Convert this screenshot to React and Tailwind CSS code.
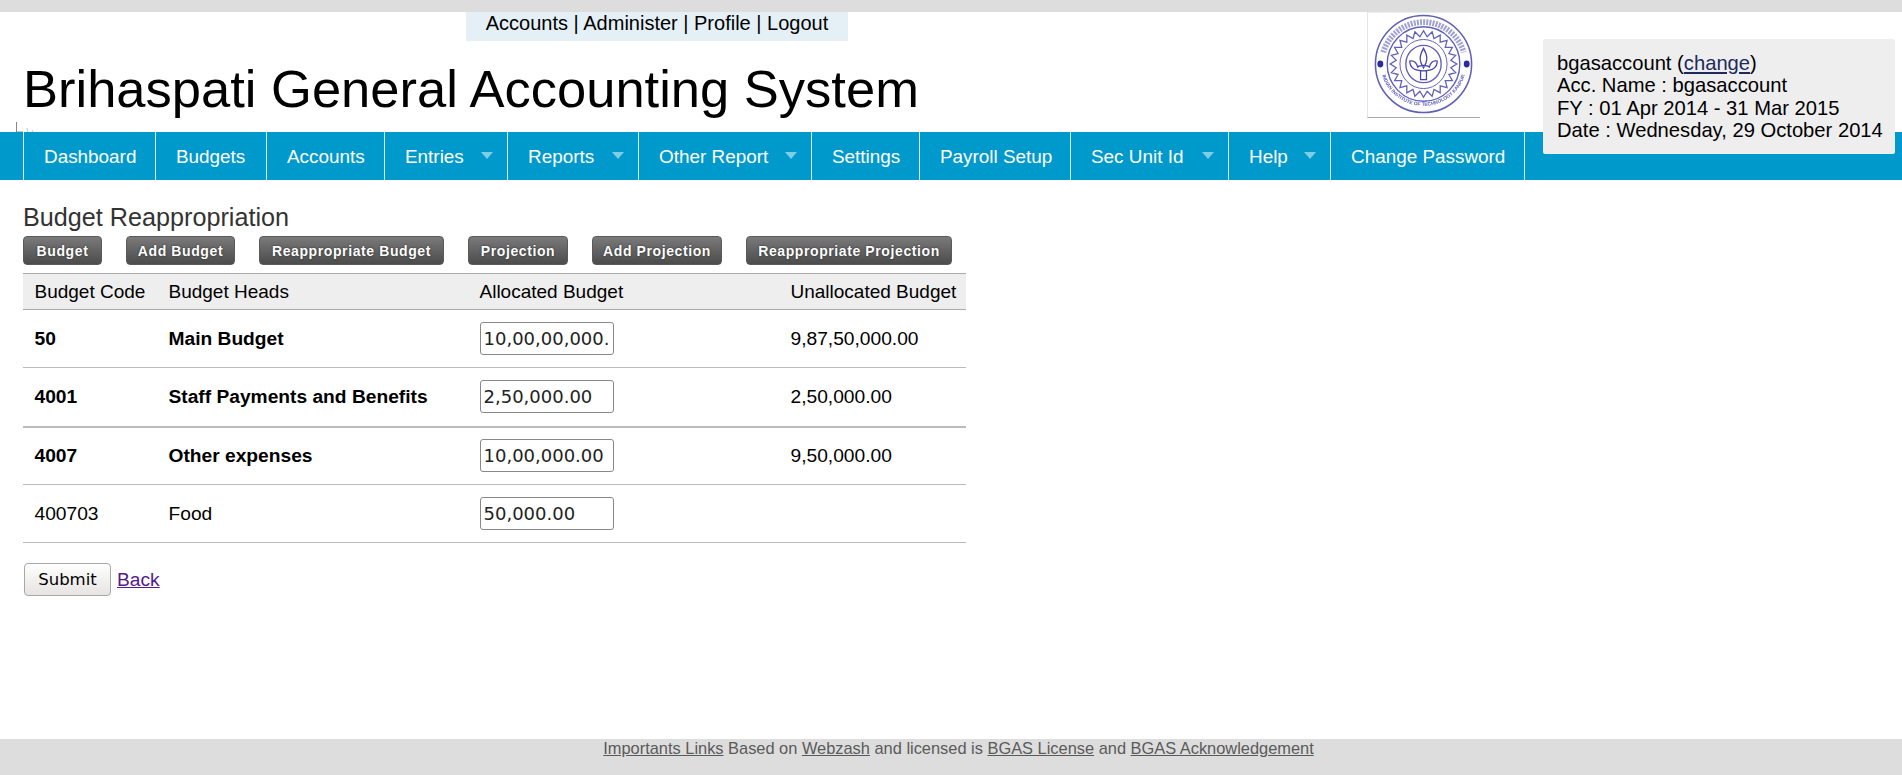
import React from 'react';

const NAV = [
  { label: 'Dashboard', w: 132 },
  { label: 'Budgets', w: 111 },
  { label: 'Accounts', w: 118 },
  { label: 'Entries', w: 123, drop: true },
  { label: 'Reports', w: 131, drop: true },
  { label: 'Other Report', w: 173, drop: true },
  { label: 'Settings', w: 108 },
  { label: 'Payroll Setup', w: 151 },
  { label: 'Sec Unit Id', w: 158, drop: true },
  { label: 'Help', w: 102, drop: true },
  { label: 'Change Password', w: 195 },
];

const TOOLS = [
  { label: 'Budget', w: 'w-[79px]' },
  { label: 'Add Budget', w: 'w-[109px]' },
  { label: 'Reappropriate Budget', w: 'w-[185px]' },
  { label: 'Projection', w: 'w-[100px]' },
  { label: 'Add Projection', w: 'w-[130px]' },
  { label: 'Reappropriate Projection', w: 'w-[206px]' },
];

const ROWS = [
  { code: '50', head: 'Main Budget', alloc: '10,00,00,000.00', unalloc: '9,87,50,000.00', bold: true, line: 'h-[58px] border-b border-[#bbbbbb]' },
  { code: '4001', head: 'Staff Payments and Benefits', alloc: '2,50,000.00', unalloc: '2,50,000.00', bold: true, line: 'h-[59px] border-b-2 border-[#bbbbbb]' },
  { code: '4007', head: 'Other expenses', alloc: '10,00,000.00', unalloc: '9,50,000.00', bold: true, line: 'h-[58px] border-b border-[#bbbbbb]' },
  { code: '400703', head: 'Food', alloc: '50,000.00', unalloc: '', line: 'h-[58px] border-b border-[#bbbbbb]' },
];

function gearPath(cx, cy, r1, r2, n) {
  let d = '';
  for (let i = 0; i < n; i++) {
    const a = (i / n) * Math.PI * 2;
    const b = ((i + 0.5) / n) * Math.PI * 2;
    d += `${i === 0 ? 'M' : 'L'}${(cx + r1 * Math.cos(a)).toFixed(1)} ${(cy + r1 * Math.sin(a)).toFixed(1)}`;
    d += `L${(cx + r2 * Math.cos(b)).toFixed(1)} ${(cy + r2 * Math.sin(b)).toFixed(1)}`;
  }
  return d + 'Z';
}

function Logo() {
  return (
    <div className="w-[113px] h-[106px] flex-none border-b border-[#aaaaaa] border-l border-l-[#e4e4e4] border-t border-t-[#eeeeee]">
      <svg viewBox="0 0 113 106" className="w-full h-full blur-[0.4px]" fill="none" stroke="#6060b8">
        <defs>
          <path id="lowerArc" d="M13 60a44 44 0 0 0 86 0" />
        </defs>
        <ellipse cx="56" cy="52" rx="49" ry="49.5" strokeWidth="1.6" />
        <path d="M15 40a43 44 0 0 1 82 0" strokeWidth="6" strokeDasharray="2 1.2" opacity="0.6" />
        <text fontFamily="Liberation Sans, sans-serif" fontSize="5" fill="#6060b8" stroke="none" fontWeight="bold">
          <textPath href="#lowerArc" startOffset="50%" textAnchor="middle">INDIAN INSTITUTE OF TECHNOLOGY KANPUR</textPath>
        </text>
        <ellipse cx="56" cy="52" rx="37" ry="38" strokeWidth="1.4" />
        <path d={gearPath(56, 52, 34, 28, 24)} strokeWidth="1.3" />
        <ellipse cx="56" cy="52" rx="24" ry="25" strokeWidth="1" />
        <ellipse cx="56" cy="52" rx="18" ry="19" strokeWidth="1.4" />
        <path d="M56 36c-4 7-5 12 0 20 5-8 4-13 0-20zM42 49c0 8 7 10 14 10s14-2 14-10c-5-1-7 2-8 6-2-2-10-2-12 0-1-4-3-7-8-6zM53 59v9h6v-9" strokeWidth="1.3" stroke="#4646ac" />
        <ellipse cx="12" cy="52" rx="3" ry="3.5" fill="#2c2c9c" stroke="none" />
        <ellipse cx="100" cy="52" rx="3" ry="3.5" fill="#2c2c9c" stroke="none" />
      </svg>
    </div>
  );
}

function BrokenImage() {
  return (
    <svg viewBox="0 0 26 10" className="absolute left-[16px] top-[122px] w-[26px] h-[10px]" fill="none">
      <path d="M0.5 0v10" stroke="#888" />
      <path d="M1 9.5h6M11 6l1 4M16 8l1 2" stroke="#c4c4c4" />
    </svg>
  );
}

export default function App() {
  return (
    <div className="relative flex flex-col h-screen bg-white text-black font-['Liberation_Sans',Arial,sans-serif] text-[19.2px] overflow-hidden">
      <div className="h-3 bg-[#dddddd]" />

      {/* Header */}
      <div className="flex h-[120px]">
        <div className="w-[1367px] pl-[23px]">
          <div className="ml-[443px] w-[382px] h-[29px] bg-[#e4f0f5] text-center text-[20px] leading-[23px]">
            Accounts | Administer | Profile | Logout
          </div>
          <h1 className="mt-[17px] text-[52.5px] leading-[62px] font-normal whitespace-nowrap">
            Brihaspati General Accounting System
          </h1>
        </div>
        <Logo />
      </div>
      <BrokenImage />

      <div className="absolute left-[1543px] top-[39px] w-[352px] h-[115px] z-10 bg-[#eeeeee] rounded-[2px] pl-[14px] pt-[13px] text-[20.2px] leading-[22.4px] whitespace-nowrap">
        <div>bgasaccount (<a href="#" className="text-[#1c2a5e] underline">change</a>)</div>
        <div>Acc. Name : bgasaccount</div>
        <div>FY : 01 Apr 2014 - 31 Mar 2015</div>
        <div>Date : Wednesday, 29 October 2014</div>
      </div>

      {/* Nav */}
      <div className="flex h-[48px] bg-[#0099cc] pl-[23px]">
        {NAV.map((item) => (
          <div
            key={item.label}
            style={{ width: item.w }}
            className="relative flex-none border-l border-[#d9eff7] last:border-r pl-[20px] text-white text-[18.9px] leading-[49px] whitespace-nowrap"
          >
            {item.label}
            {item.drop && (
              <span className="absolute right-[14px] top-[20px] w-0 h-0 border-x-[6px] border-x-transparent border-t-[7px] border-t-[#7fcce5]" />
            )}
          </div>
        ))}
      </div>

      {/* Content */}
      <div className="pl-[23px] pt-[23px] w-[967px] box-content">
        <h2 className="text-[25.2px] leading-[28px] text-[#333333] font-normal">Budget Reappropriation</h2>
        <div className="flex gap-[24px] mt-[5px]">
          {TOOLS.map((t) => (
            <a
              key={t.label}
              href="#"
              className={`${t.w} h-[29px] flex items-center justify-center pt-[1px] rounded-[4px] border border-[#5a5a5a] bg-gradient-to-b from-[#7a7a7a] to-[#4c4c4c] text-white text-[14px] font-bold tracking-[0.6px] [text-shadow:0_0_2px_#222] whitespace-nowrap`}
            >
              {t.label}
            </a>
          ))}
        </div>

        <table className="mt-2 w-[943px] table-fixed border-collapse">
          <colgroup>
            <col className="w-[134px]" />
            <col className="w-[311px]" />
            <col className="w-[311px]" />
            <col className="w-[187px]" />
          </colgroup>
          <thead>
            <tr className="h-[36px] bg-[#eeeeee] border-y border-[#aaaaaa] text-[19px]">
              <th className="pl-[11.5px] pt-px text-left font-normal whitespace-nowrap">Budget Code</th>
              <th className="pl-[11.5px] pt-px text-left font-normal">Budget Heads</th>
              <th className="pl-[11.5px] pt-px text-left font-normal">Allocated Budget</th>
              <th className="pl-[11.5px] pt-px text-left font-normal whitespace-nowrap">Unallocated Budget</th>
            </tr>
          </thead>
          <tbody>
            {ROWS.map((r) => (
              <tr key={r.code} className={`${r.line} ${r.bold ? 'font-bold' : ''}`}>
                <td className="pl-[11.5px] pt-[2px]">{r.code}</td>
                <td className="pl-[11.5px] pt-[2px]">{r.head}</td>
                <td className="pl-[11.5px]">
                  <input
                    readOnly
                    value={r.alloc}
                    className="block w-[134px] h-[33px] px-[3px] bg-white border border-[#888888] rounded-[3px] font-['DejaVu_Sans',sans-serif] text-[18px] text-[#222222] font-normal outline-none"
                  />
                </td>
                <td className="pl-[11.5px] pt-[2px] font-normal">{r.unalloc}</td>
              </tr>
            ))}
          </tbody>
        </table>

        <div className="flex items-center gap-[6px] mt-[20px] ml-px">
          <button className="w-[87px] h-[33px] pt-[2px] rounded-[4px] border border-[#a8a8a8] bg-gradient-to-b from-white to-[#e6e4e1] font-['DejaVu_Sans',sans-serif] text-[16.5px] text-black">
            Submit
          </button>
          <a href="#" className="pt-[2px] text-[#551a8b] underline">Back</a>
        </div>
      </div>

      {/* Footer */}
      <div className="mt-auto h-[36px] pl-[15px] bg-[#dddddd] text-center text-[16.4px] leading-[19px] text-[#5a5a5a]">
        <a href="#" className="underline">Importants Links</a> Based on <a href="#" className="underline">Webzash</a> and licensed is <a href="#" className="underline">BGAS License</a> and <a href="#" className="underline">BGAS Acknowledgement</a>
      </div>
    </div>
  );
}
